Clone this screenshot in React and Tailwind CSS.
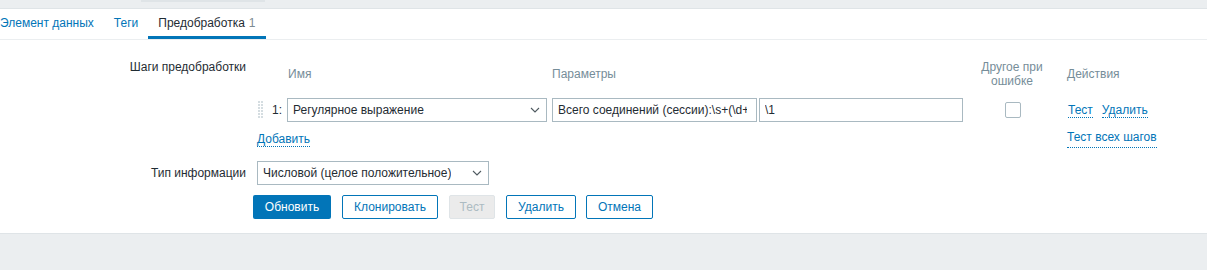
import React from "react";

const font = { fontFamily: '"Liberation Sans", Arial, sans-serif' };

function Chevron() {
  return (
    <svg width="10" height="6" viewBox="0 0 10 6" className="shrink-0">
      <path d="M1 1l4 4 4-4" fill="none" stroke="#4f5a60" strokeWidth="1.1" />
    </svg>
  );
}

function Select({ value, className }) {
  return (
    <div
      className={
        "h-6 border border-[#a9b9c1] bg-white flex items-center justify-between pl-[5px] pr-[6px] text-[12px] text-[#1f2c33] " +
        className
      }
    >
      <span className="truncate">{value}</span>
      <Chevron />
    </div>
  );
}

function DotLink({ children }) {
  return (
    <span className="inline-block leading-[14px] text-[12px] text-[#0275b8] border-b border-dotted border-[#0275b8]">
      {children}
    </span>
  );
}

function DragHandle() {
  const dots = [];
  for (let r = 0; r < 6; r++) {
    for (let c = 0; c < 2; c++) {
      dots.push(<rect key={r + "-" + c} x={c * 3} y={r * 3} width="2" height="2" fill="#d5dde1" />);
    }
  }
  return (
    <svg width="5" height="18" viewBox="0 0 5 18">
      {dots}
    </svg>
  );
}

export default function App() {
  return (
    <div style={font} className="w-[1207px] h-[270px] bg-[#ebeef0] overflow-hidden text-[12px] text-[#1f2c33]">
      <div className="h-[8px] relative border-b border-[#dfe4e7] box-content">
        <div className="absolute left-[141px] top-0 w-[124px] h-[2px] bg-[#dfe4e7]" />
      </div>

      <div className="bg-white border-b border-[#dfe4e7]">
        {/* tabs */}
        <div className="h-[31px] border-b border-[#ebeef0] flex ml-[-10px]">
          <div className="px-[10px] h-[30px] flex items-center pb-[3px] text-[#0275b8]">Элемент данных</div>
          <div className="px-[10px] h-[30px] flex items-center pb-[3px] text-[#0275b8]">Теги</div>
          <div className="px-[10px] h-[30px] flex items-center border-b-[3px] border-[#0275b8] text-[#1f2c33]">
            Предобработка <span className="ml-[4px] text-[#7c8a92]">1</span>
          </div>
        </div>

        {/* form */}
        <div className="pt-[20px] pb-[14px]">
          <div className="flex">
            <div className="w-[246px] text-right leading-[14px]">Шаги предобработки</div>
            <div className="ml-[11px]">
              <div className="h-[28px] flex items-center text-[#768d99] leading-[14px]">
                <div className="w-[30px]" />
                <div className="w-[265px] pl-[1px]">Имя</div>
                <div className="w-[410px]">Параметры</div>
                <div className="w-[90px] ml-[5px] text-center">Другое при ошибке</div>
                <div className="ml-[10px]">Действия</div>
              </div>

              <div className="mt-[10px] h-6 flex items-center">
                <div className="w-[30px] flex items-center">
                  <div className="ml-[1px]">
                    <DragHandle />
                  </div>
                  <span className="ml-[9px]">1:</span>
                </div>
                <Select value="Регулярное выражение" className="w-[260px]" />
                <input
                  readOnly
                  value="Всего соединений (сессии):\s+(\d+)"
                  className="ml-[5px] h-6 w-[205px] border border-[#a9b9c1] pl-[5px] pr-[9px] text-[12px] text-[#1f2c33] outline-none"
                />
                <input
                  readOnly
                  value="\1"
                  className="ml-[2px] h-6 w-[204px] border border-[#a9b9c1] px-[5px] text-[12px] text-[#1f2c33] outline-none"
                />
                <div className="w-[90px] ml-[5px] flex justify-center">
                  <div className="w-4 h-4 border border-[#a9b9c1] rounded-[2px] bg-white" />
                </div>
                <div className="ml-[10px] flex gap-[9px]">
                  <DotLink>Тест</DotLink>
                  <DotLink>Удалить</DotLink>
                </div>
              </div>

              <div className="mt-[8px] flex">
                <div className="w-[810px]">
                  <DotLink>Добавить</DotLink>
                </div>
                <DotLink>Тест всех шагов</DotLink>
              </div>
            </div>
          </div>

          <div className="flex items-center mt-[13px]">
            <div className="w-[246px] text-right">Тип информации</div>
            <Select value="Числовой (целое положительное)" className="ml-[11px] w-[232px]" />
          </div>

          <div className="flex mt-[10px] ml-[253px] gap-[11px]">
            <button className="h-6 w-[78px] rounded-[2px] bg-[#0275b8] text-white">Обновить</button>
            <button className="h-6 w-[96px] rounded-[2px] border border-[#0275b8] bg-white text-[#0275b8]">Клонировать</button>
            <button className="h-6 w-[46px] rounded-[2px] border border-[#dfe4e7] bg-[#ebebeb] text-[#acbbc2]">Тест</button>
            <button className="h-6 w-[70px] rounded-[2px] border border-[#0275b8] bg-white text-[#0275b8]">Удалить</button>
            <button className="h-6 w-[67px] ml-[-1px] rounded-[2px] border border-[#0275b8] bg-white text-[#0275b8]">Отмена</button>
          </div>
        </div>
      </div>
    </div>
  );
}
